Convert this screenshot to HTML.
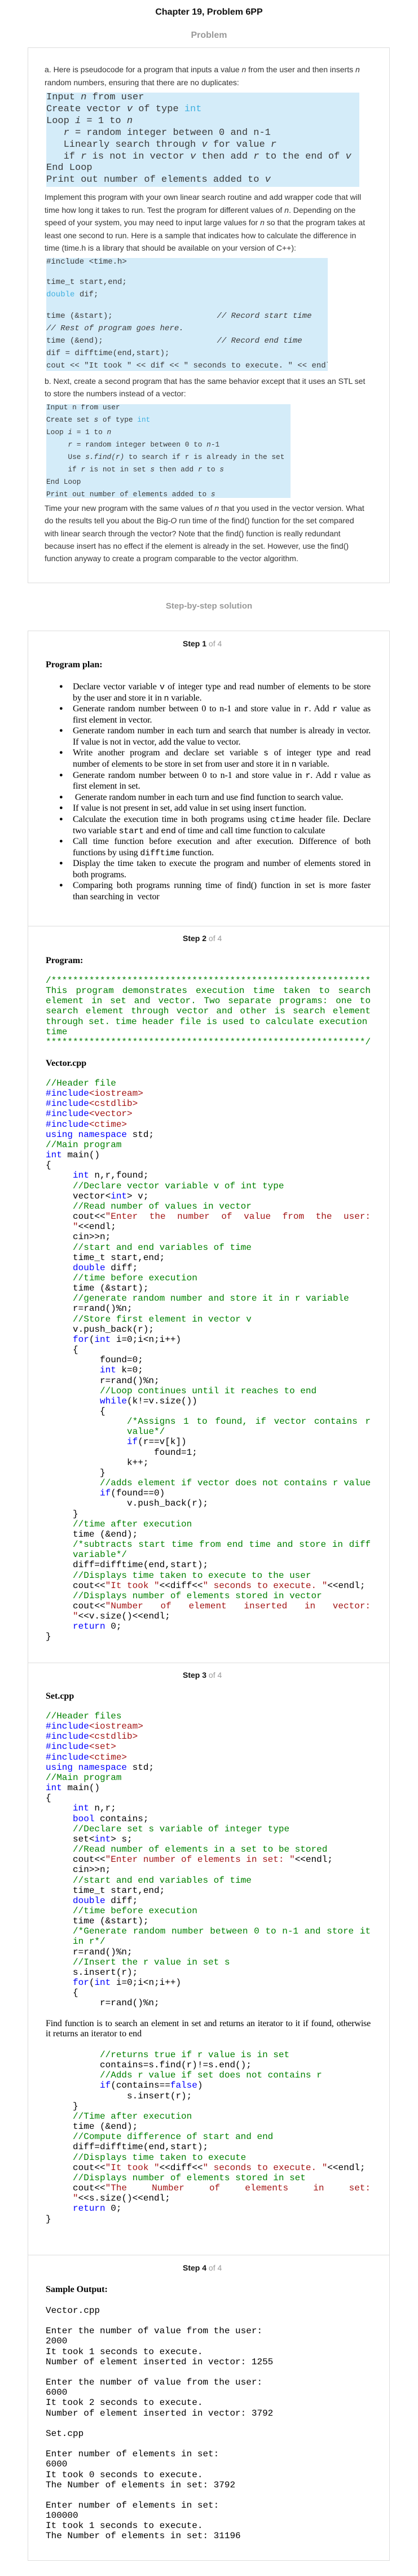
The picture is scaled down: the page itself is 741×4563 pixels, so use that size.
<!DOCTYPE html>
<html><head><meta charset="utf-8">
<style>
html,body{margin:0;padding:0;background:#fff;}
body{position:relative;width:741px;height:4563px;overflow:hidden;font-family:"Liberation Sans",Arial,sans-serif;}
.a{position:absolute;}
.title{left:0;width:741px;text-align:center;font-weight:bold;font-size:16px;line-height:20px;color:#111;}
.gray{color:#999;}
.box{border:1px solid #ddd;box-sizing:border-box;}
.hr{height:1px;background:#ddd;left:49px;width:642px;}
.para{left:79px;font-size:14px;color:#333;white-space:nowrap;}
.blue{background:#d4ecf9;overflow:hidden;font-family:"Liberation Mono",monospace;color:#3a3a3a;white-space:pre;}
.blue .k{color:#3fb0e0;}
.step{left:324px;font-size:14px;line-height:20px;font-weight:bold;color:#111;}
.step span{font-weight:normal;color:#999;}
.tb{left:81px;font-family:"Liberation Serif","Times New Roman",serif;font-weight:bold;font-size:16px;line-height:20px;color:#000;}
.code{left:81px;font-family:"Liberation Mono","Courier New",monospace;font-size:16px;line-height:18.15px;white-space:pre;color:#000;margin:0;}
.c{color:#008000;}.kw{color:#0000ff;}.s{color:#a31515;}
.j{display:inline-block;white-space:normal;text-align:justify;text-align-last:justify;vertical-align:top;height:18.15px;}
.ser{font-family:"Liberation Serif","Times New Roman",serif;font-size:16px;color:#000;}
.bl{left:81px;width:576px;}
.bl div{height:19.58px;line-height:19.58px;position:relative;}
.bl .t{position:absolute;left:48px;width:528px;white-space:nowrap;letter-spacing:-0.15px;}
.bl .t.jj{white-space:normal;text-align:justify;text-align-last:justify;}
.bl .d{position:absolute;left:24px;top:0;font-size:11px;}
.m{font-family:"Liberation Mono",monospace;font-size:15px;}
</style></head><body>

<div class="a title" style="top:12px;">Chapter 19, Problem 6PP</div>
<div class="a title gray" style="top:53px;">Problem</div>

<div class="a box" style="left:49px;top:84px;width:642px;height:949px;"></div>

<div class="a para" style="top:112px;line-height:22.7px;">a. Here is pseudocode for a program that inputs a value <i>n</i> from the user and then inserts <i>n</i><br>random numbers, ensuring that there are no duplicates:</div>

<div class="a blue" style="left:82px;top:164px;width:555px;height:167px;font-size:17px;line-height:20.9px;"><div style="margin-top:-1px">Input <i>n</i> from user
Create vector <i>v</i> of type <span class="k">int</span>
Loop <i>i</i> = 1 to <i>n</i>
   <i>r</i> = random integer between 0 and n-1
   Linearly search through <i>v</i> for value <i>r</i>
   if <i>r</i> is not in vector <i>v</i> then add <i>r</i> to the end of <i>v</i>
End Loop
Print out number of elements added to <i>v</i></div></div>

<div class="a para" style="top:338px;line-height:22.5px;">Implement this program with your own linear search routine and add wrapper code that will<br>time how long it takes to run. Test the program for different values of <i>n</i>. Depending on the<br>speed of your system, you may need to input large values for <i>n</i> so that the program takes at<br>least one second to run. Here is a sample that indicates how to calculate the difference in<br>time (time.h is a library that should be available on your version of C++):</div>

<div class="a blue" style="left:82px;top:457px;width:499px;height:200px;font-size:14px;line-height:22px;"><div style="margin-top:-4px"><div>#include &lt;time.h&gt;</div><div style="height:14px"></div><div>time_t start,end;</div><div><span class="k">double</span> dif;</div><div style="height:16px"></div><div>time (&amp;start);                      <i>// Record start time</i></div><div><i>// Rest of program goes here.</i></div><div>time (&amp;end);                        <i>// Record end time</i></div><div>dif = difftime(end,start);</div><div>cout &lt;&lt; "It took " &lt;&lt; dif &lt;&lt; " seconds to execute. " &lt;&lt; endl;</div></div></div>

<div class="a para" style="top:664px;line-height:22px;">b. Next, create a second program that has the same behavior except that it uses an STL set<br>to store the numbers instead of a vector:</div>

<div class="a blue" style="left:82px;top:716px;width:433px;height:166px;font-size:12.8px;line-height:22px;"><div style="margin-top:-5px">Input n from user
Create set <i>s</i> of type <span class="k">int</span>
Loop <i>i</i> = 1 to <i>n</i>
     <i>r</i> = random integer between 0 to <i>n</i>-1
     Use <i>s.find(r)</i> to search if r is already in the set
     if <i>r</i> is not in set <i>s</i> then add <i>r</i> to <i>s</i>
End Loop
Print out number of elements added to <i>s</i></div></div>

<div class="a para" style="top:889px;line-height:22.3px;">Time your new program with the same values of <i>n</i> that you used in the vector version. What<br>do the results tell you about the Big-<i>O</i> run time of the find() function for the set compared<br>with linear search through the vector? Note that the find() function is really redundant<br>because insert has no effect if the element is already in the set. However, use the find()<br>function anyway to create a program comparable to the vector algorithm.</div>

<div class="a title gray" style="top:1064px;font-size:15px;">Step-by-step solution</div>

<div class="a box" style="left:49px;top:1117px;width:642px;height:3419px;"></div>
<div class="a hr" style="top:1640px;"></div>
<div class="a hr" style="top:2945px;"></div>
<div class="a hr" style="top:3994px;"></div>

<div class="a step" style="top:1130px;">Step 1 <span>of 4</span></div>
<div class="a tb" style="top:1168px;">Program plan:</div>

<div class="a bl ser" style="top:1207px;">
<div><span class="d">●</span><span class="t jj">Declare vector variable <span class="m">v</span> of integer type and read number of elements to be store</span></div>
<div><span class="t">by the user and store it in <span class="m">n</span> variable.</span></div>
<div><span class="d">●</span><span class="t jj">Generate random number between 0 to n-1 and store value in <span class="m">r</span>. Add <span class="m">r</span> value as</span></div>
<div><span class="t">first element in vector.</span></div>
<div><span class="d">●</span><span class="t jj">Generate random number in each turn and search that number is already in vector.</span></div>
<div><span class="t">If value is not in vector, add the value to vector.</span></div>
<div><span class="d">●</span><span class="t jj">Write another program and declare set variable <span class="m">s</span> of integer type and read</span></div>
<div><span class="t">number of elements to be store in set from user and store it in <span class="m">n</span> variable.</span></div>
<div><span class="d">●</span><span class="t jj">Generate random number between 0 to n-1 and store value in <span class="m">r</span>. Add r value as</span></div>
<div><span class="t">first element in set.</span></div>
<div><span class="d">●</span><span class="t">&nbsp;Generate random number in each turn and use find function to search value.</span></div>
<div><span class="d">●</span><span class="t">If value is not present in set, add value in set using insert function.</span></div>
<div><span class="d">●</span><span class="t jj">Calculate the execution time in both programs using <span class="m">ctime</span> header file. Declare</span></div>
<div><span class="t">two variable <span class="m">start</span> and <span class="m">end</span> of time and call time function to calculate</span></div>
<div><span class="d">●</span><span class="t jj">Call time function before execution and after execution. Difference of both</span></div>
<div><span class="t">functions by using <span class="m">difftime</span> function.</span></div>
<div><span class="d">●</span><span class="t jj">Display the time taken to execute the program and number of elements stored in</span></div>
<div><span class="t">both programs.</span></div>
<div><span class="d">●</span><span class="t jj">Comparing both programs running time of find() function in set is more faster</span></div>
<div><span class="t">than searching in&nbsp; vector</span></div>
</div>

<div class="a step" style="top:1652px;">Step 2 <span>of 4</span></div>
<div class="a tb" style="top:1692px;">Program:</div>

<pre class="a code c" style="top:1728px;">/***********************************************************
<span class="j" style="width:576px">This program demonstrates execution time taken to search</span>
<span class="j" style="width:576px">element in set and vector. Two separate programs: one to</span>
<span class="j" style="width:576px">search element through vector and other is search element</span>
<span style="letter-spacing:-0.1px">through set. time header file is used to calculate execution</span>
time
***********************************************************/</pre>

<div class="a tb" style="top:1874px;">Vector.cpp</div>

<pre class="a code" style="top:1910px;"><span class="c">//Header file</span>
<span class="kw">#include</span><span class="s">&lt;iostream&gt;</span>
<span class="kw">#include</span><span class="s">&lt;cstdlib&gt;</span>
<span class="kw">#include</span><span class="s">&lt;vector&gt;</span>
<span class="kw">#include</span><span class="s">&lt;ctime&gt;</span>
<span class="kw">using namespace</span> std;
<span class="c">//Main program</span>
<span class="kw">int</span> main()
{
     <span class="kw">int</span> n,r,found;
     <span class="c">//Declare vector variable v of int type</span>
     vector&lt;<span class="kw">int</span>&gt; v;
     <span class="c">//Read number of values in vector</span>
     <span class="j" style="width:528px">cout&lt;&lt;<span class="s">"Enter the number of value from the user:</span></span>
     <span class="s">"</span>&lt;&lt;endl;
     cin&gt;&gt;n;
     <span class="c">//start and end variables of time</span>
     time_t start,end;
     <span class="kw">double</span> diff;
     <span class="c">//time before execution</span>
     time (&amp;start);
     <span class="c">//generate random number and store it in r variable</span>
     r=rand()%n;
     <span class="c">//Store first element in vector v</span>
     v.push_back(r);
     <span class="kw">for</span>(<span class="kw">int</span> i=0;i&lt;n;i++)
     {
          found=0;
          <span class="kw">int</span> k=0;
          r=rand()%n;
          <span class="c">//Loop continues until it reaches to end</span>
          <span class="kw">while</span>(k!=v.size())
          {
               <span class="j c" style="width:432px">/*Assigns 1 to found, if vector contains r</span>
               <span class="c">value*/</span>
               <span class="kw">if</span>(r==v[k])
                    found=1;
               k++;
          }
          <span class="c">//adds element if vector does not contains r value</span>
          <span class="kw">if</span>(found==0)
               v.push_back(r);
     }
     <span class="c">//time after execution</span>
     time (&amp;end);
     <span class="j c" style="width:528px">/*subtracts start time from end time and store in diff</span>
     <span class="c">variable*/</span>
     diff=difftime(end,start);
     <span class="c">//Displays time taken to execute to the user</span>
     cout&lt;&lt;<span class="s">"It took "</span>&lt;&lt;diff&lt;&lt;<span class="s">" seconds to execute. "</span>&lt;&lt;endl;
     <span class="c">//Displays number of elements stored in vector</span>
     <span class="j" style="width:528px">cout&lt;&lt;<span class="s">"Number of element inserted in vector:</span></span>
     <span class="s">"</span>&lt;&lt;v.size()&lt;&lt;endl;
     <span class="kw">return</span> 0;
}</pre>

<div class="a step" style="top:2957px;">Step 3 <span>of 4</span></div>
<div class="a tb" style="top:2995px;">Set.cpp</div>

<pre class="a code" style="top:3031px;"><span class="c">//Header files</span>
<span class="kw">#include</span><span class="s">&lt;iostream&gt;</span>
<span class="kw">#include</span><span class="s">&lt;cstdlib&gt;</span>
<span class="kw">#include</span><span class="s">&lt;set&gt;</span>
<span class="kw">#include</span><span class="s">&lt;ctime&gt;</span>
<span class="kw">using namespace</span> std;
<span class="c">//Main program</span>
<span class="kw">int</span> main()
{
     <span class="kw">int</span> n,r;
     <span class="kw">bool</span> contains;
     <span class="c">//Declare set s variable of integer type</span>
     set&lt;<span class="kw">int</span>&gt; s;
     <span class="c">//Read number of elements in a set to be stored</span>
     cout&lt;&lt;<span class="s">"Enter number of elements in set: "</span>&lt;&lt;endl;
     cin&gt;&gt;n;
     <span class="c">//start and end variables of time</span>
     time_t start,end;
     <span class="kw">double</span> diff;
     <span class="c">//time before execution</span>
     time (&amp;start);
     <span class="j c" style="width:528px">/*Generate random number between 0 to n-1 and store it</span>
     <span class="c">in r*/</span>
     r=rand()%n;
     <span class="c">//Insert the r value in set s</span>
     s.insert(r);
     <span class="kw">for</span>(<span class="kw">int</span> i=0;i&lt;n;i++)
     {
          r=rand()%n;</pre>

<div class="a ser" style="left:81px;top:3576px;width:576px;line-height:18.2px;">
<div style="text-align:justify;text-align-last:justify;white-space:nowrap;letter-spacing:-0.2px;">Find function is to search an element in set and returns an iterator to it if found, otherwise</div>
<div>it returns an iterator to end</div>
</div>

<pre class="a code" style="top:3631px;">          <span class="c">//returns true if r value is in set</span>
          contains=s.find(r)!=s.end();
          <span class="c">//Adds r value if set does not contains r</span>
          <span class="kw">if</span>(contains==<span class="kw">false</span>)
               s.insert(r);
     }
     <span class="c">//Time after execution</span>
     time (&amp;end);
     <span class="c">//Compute difference of start and end</span>
     diff=difftime(end,start);
     <span class="c">//Displays time taken to execute</span>
     cout&lt;&lt;<span class="s">"It took "</span>&lt;&lt;diff&lt;&lt;<span class="s">" seconds to execute. "</span>&lt;&lt;endl;
     <span class="c">//Displays number of elements stored in set</span>
     <span class="j" style="width:528px">cout&lt;&lt;<span class="s">"The Number of elements in set:</span></span>
     <span class="s">"</span>&lt;&lt;s.size()&lt;&lt;endl;
     <span class="kw">return</span> 0;
}</pre>

<div class="a step" style="top:4007px;">Step 4 <span>of 4</span></div>
<div class="a tb" style="top:4046px;">Sample Output:</div>

<pre class="a code" style="top:4084px;">Vector.cpp

Enter the number of value from the user:
2000
It took 1 seconds to execute.
Number of element inserted in vector: 1255

Enter the number of value from the user:
6000
It took 2 seconds to execute.
Number of element inserted in vector: 3792

Set.cpp

Enter number of elements in set:
6000
It took 0 seconds to execute.
The Number of elements in set: 3792

Enter number of elements in set:
100000
It took 1 seconds to execute.
The Number of elements in set: 31196</pre>

</body></html>
